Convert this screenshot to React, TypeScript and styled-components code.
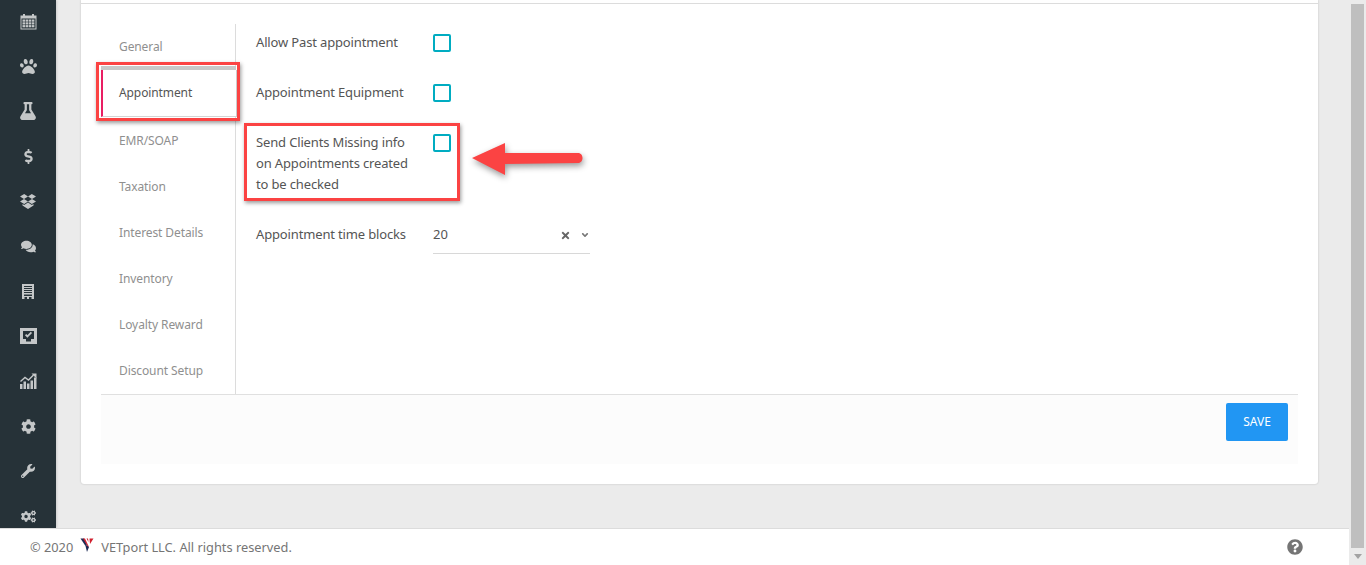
import React from "react"
import styled, { createGlobalStyle } from "styled-components"
import {
  FaPaw,
  FaFlask,
  FaDollarSign,
  FaComments,
  FaCog,
  FaWrench,
  FaCogs,
  FaQuestionCircle,
  FaTimes,
  FaAngleDown,
} from "react-icons/fa"

const GlobalStyle = createGlobalStyle`
  html, body {
    margin: 0;
    padding: 0;
    height: 565px;
    overflow: hidden;
    background: #ebebeb;
    font-family: "Noto Sans", "Liberation Sans", sans-serif;
  }
  * { box-sizing: border-box; }
`

const Page = styled.div`
  display: flex;
  width: 1366px;
  height: 565px;
`

const Viewport = styled.div`
  flex: 1;
  display: flex;
  flex-direction: column;
  min-width: 0;
`

const Body = styled.div`
  flex: 1;
  display: flex;
  min-height: 0;
`

const Sidebar = styled.nav`
  width: 56px;
  background: #263238;
  display: flex;
  flex-direction: column;
  align-items: center;
  gap: 25px;
  padding-top: 11px;
  overflow: hidden;
  box-shadow: 1px 0 2px rgba(0, 0, 0, 0.12);
  color: #c4c7c8;
`

const SideIcon = styled.span`
  height: 20px;
  flex: none;
  display: flex;
  align-items: center;
  justify-content: center;
`

const Main = styled.main`
  flex: 1;
  padding: 0 31px 0 25px;
  min-width: 0;
`

const Card = styled.section`
  position: relative;
  height: 484px;
  background: #fff;
  border-radius: 0 0 3px 3px;
  box-shadow: 0 0 2px rgba(0, 0, 0, 0.22);
  padding: 0 20px;
`

const CardHeader = styled.div`
  height: 4px;
  margin: 0 -20px 20px;
  border-bottom: 1px solid #dcdcdc;
`

const Settings = styled.div`
  display: flex;
  height: 370px;
`

const Tabs = styled.ul`
  width: 135px;
  margin: 0;
  padding: 0;
  list-style: none;
  border-right: 1px solid #dcdcdc;
`

const Tab = styled.li<{ $active?: boolean }>`
  height: 46px;
  padding-left: 18px;
  display: flex;
  align-items: center;
  font-size: 12px;
  letter-spacing: -0.1px;
  color: ${(p) => (p.$active ? "#555" : "#8f8f8f")};
  &:first-child {
    padding-bottom: 2px;
  }
  ${(p) =>
    p.$active &&
    `
    height: 47px;
    padding: 0 0 1px 16px;
    border-left: 2px solid #e91e63;
    border-bottom: 1px solid #d4d4d4;
    box-shadow: 0 -4px 0 #c8c8c8, 1px 0 0 #ccc;
    background: #fff;
    margin-right: -1px;
    position: relative;
  `}
`

const Form = styled.div`
  flex: 1;
  padding: 8px 0 0 20px;
`

const Row = styled.div<{ $height: number }>`
  display: grid;
  grid-template-columns: 177px 157px;
  align-items: start;
  height: ${(p) => p.$height}px;
`

const Label = styled.label`
  font-size: 13px;
  line-height: 21px;
  letter-spacing: -0.15px;
  color: #555;
  width: 156px;
`

const Checkbox = styled.span`
  display: block;
  width: 18px;
  height: 18px;
  margin-top: 2px;
  border: 2px solid #00acc1;
  border-radius: 2px;
`

const Select = styled.div`
  height: 30px;
  display: flex;
  align-items: flex-start;
  gap: 9px;
  line-height: 21px;
  border-bottom: 1px solid #d8d8d8;
  font-size: 13px;
  color: #555;
`

const SelectValue = styled.span`
  flex: 1;
`

const ClearIcon = styled(FaTimes)`
  font-size: 11px;
  margin-top: 6px;
  color: #666;
`

const CaretIcon = styled(FaAngleDown)`
  font-size: 10px;
  margin-top: 6px;
  color: #777;
`

const ActionBar = styled.div`
  height: 70px;
  background: #fcfcfc;
  border-top: 1px solid #e0e0e0;
  display: flex;
  justify-content: flex-end;
  padding: 8px 10px 0 0;
`

const SaveButton = styled.button`
  width: 62px;
  height: 38px;
  border: 0;
  border-radius: 2px;
  padding: 0 0 2px;
  background: #2196f3;
  color: #fff;
  font: 12px "Noto Sans", "Liberation Sans", sans-serif;
`

const Footer = styled.footer`
  height: 37px;
  flex: none;
  background: #fff;
  border-top: 1px solid #dcdcdc;
  display: flex;
  align-items: center;
  padding: 0 46px 0 30px;
  font-size: 12.8px;
  color: #757575;
`

const Copyright = styled.span`
  flex: 1;
  display: flex;
  align-items: center;
  gap: 6px;
`

const LogoMark = styled.svg`
  margin: -4px 1px 0 1px;
`

const HelpIcon = styled(FaQuestionCircle)`
  font-size: 16px;
  color: #757575;
`

const Scrollbar = styled.div`
  width: 17px;
  flex: none;
  background: #ebebeb;
  display: flex;
  flex-direction: column;
  align-items: center;
  padding-top: 4px;
`

const ScrollThumb = styled.div`
  width: 13px;
  height: 544px;
  background: #bfbfbf;
`

const ScrollArrow = styled.div`
  margin-top: 6px;
  border-left: 4px solid transparent;
  border-right: 4px solid transparent;
  border-top: 5px solid #a3a3a3;
`

const Callout = styled.div<{ $x: number; $y: number; $w: number; $h: number }>`
  position: absolute;
  left: ${(p) => p.$x}px;
  top: ${(p) => p.$y}px;
  width: ${(p) => p.$w}px;
  height: ${(p) => p.$h}px;
  border: 3px solid #fb4343;
  box-shadow: 1px 2px 4px rgba(0, 0, 0, 0.4);
  pointer-events: none;
`

const ArrowMark = styled.svg`
  position: absolute;
  left: 391px;
  top: 140px;
  overflow: visible;
  filter: drop-shadow(1px 3px 3px rgba(0, 0, 0, 0.4));
`

const CalendarIcon = () => (
  <svg width="17" height="17" viewBox="0 0 17 17" fill="currentColor">
    <path
      fillRule="evenodd"
      d="M0.5 2.5 H3 V1 H5 V2.5 H12 V1 H14 V2.5 H16.5 V16.5 H0.5 Z M1.5 5.5 V15.5 H15.5 V5.5 Z"
    />
    {[6.5, 9.3, 12.1].map((y) =>
      [2.5, 5.6, 8.7, 11.8].map((x) => <rect key={`${x}-${y}`} x={x} y={y} width="2.6" height="2.2" />)
    )}
  </svg>
)

const DropboxIcon = () => (
  <svg width="16" height="15" viewBox="0 0 16 15" fill="currentColor">
    <path d="M4.2 0 L8 2.5 L4 5 L0 2.5 Z M11.8 0 L16 2.5 L12 5 L8 2.5 Z M4 5 L8 7.5 L4.2 10 L0 7.5 Z M12 5 L16 7.5 L11.8 10 L8 7.5 Z M8 8.5 L11.8 11 L13.5 10 V11.5 L8 15 L2.5 11.5 V10 L4.2 11 Z" />
  </svg>
)

const BillIcon = () => (
  <svg width="12" height="15" viewBox="0 0 12 15" fill="currentColor">
    <path
      fillRule="evenodd"
      d="M0 0 H12 V15 H0 Z M2 2 V3 H10 V2 Z M2 4 V5 H10 V4 Z M2 6 V7 H10 V6 Z M2 8 V9 H10 V8 Z M2 10.5 V12 H10 V10.5 Z M2.5 13 V15 H5 V13 Z M7 13 V15 H9.5 V13 Z"
    />
  </svg>
)

const CheckBoxIcon = () => (
  <svg width="17" height="16" viewBox="0 0 17 16" fill="currentColor">
    <path
      fillRule="evenodd"
      d="M0 0 H17 V16 H0 Z M3 3 V11 H6 V13.5 H11 V11 H14 V3 Z"
    />
    <path d="M5.6 6.6 L7.4 8.4 L11.4 4.4" fill="none" stroke="currentColor" strokeWidth="1.8" />
  </svg>
)

const ChartIcon = () => (
  <svg width="17" height="16" viewBox="0 0 17 16" fill="currentColor">
    <path d="M0 11 H2.5 V16 H0 Z M3.5 8.5 H6 V16 H3.5 Z M7 10.5 H9.5 V16 H7 Z M10.5 7.5 H13 V16 H10.5 Z M14 4.5 H16.5 V16 H14 Z" />
    <path d="M0.5 8.5 L5 4.5 L8.5 7 L13.5 2" fill="none" stroke="currentColor" strokeWidth="1.4" />
    <path d="M11.5 0.5 H16.5 V5.5 Z" />
  </svg>
)

const sideIcons = [
  <CalendarIcon />,
  <FaPaw size={17} />,
  <FaFlask size={18} />,
  <FaDollarSign size={15} />,
  <DropboxIcon />,
  <FaComments size={15} />,
  <BillIcon />,
  <CheckBoxIcon />,
  <ChartIcon />,
  <FaCog size={15} />,
  <FaWrench size={14} />,
  <FaCogs size={15} />,
]

const tabs = ["General", "Appointment", "EMR/SOAP", "Taxation", "Interest Details", "Inventory", "Loyalty Reward", "Discount Setup"]

const Logo = () => (
  <LogoMark width="14" height="14" viewBox="0 0 14 14">
    <path d="M0.5 0.5 L4 0.5 L7 7 L5.5 8 Z" fill="#1c2a55" />
    <path d="M5.5 8 L7 7 L9 9 L7 14 Z" fill="#1c2a55" />
    <path d="M3 0.5 L5 0.5 L9 9 L7.5 8 Z" fill="#d0202f" />
    <path d="M6.5 0.5 L8 0.5 L8.5 4 Z M9.5 0.5 L13.5 0.5 L10 6 Z" fill="#d0202f" />
  </LogoMark>
)

export default function App() {
  return (
    <Page>
      <GlobalStyle />
      <Viewport>
        <Body>
          <Sidebar>
            {sideIcons.map((icon, i) => (
              <SideIcon key={i}>{icon}</SideIcon>
            ))}
          </Sidebar>
          <Main>
            <Card>
              <CardHeader />
              <Settings>
                <Tabs>
                  {tabs.map((t) => (
                    <Tab key={t} $active={t === "Appointment"}>
                      {t}
                    </Tab>
                  ))}
                </Tabs>
                <Form>
                  <Row $height={50}>
                    <Label>Allow Past appointment</Label>
                    <Checkbox />
                  </Row>
                  <Row $height={50}>
                    <Label>Appointment Equipment</Label>
                    <Checkbox />
                  </Row>
                  <Row $height={92}>
                    <Label>Send Clients Missing info on Appointments created to be checked</Label>
                    <Checkbox />
                  </Row>
                  <Row $height={40}>
                    <Label>Appointment time blocks</Label>
                    <Select>
                      <SelectValue>20</SelectValue>
                      <ClearIcon />
                      <CaretIcon />
                    </Select>
                  </Row>
                </Form>
              </Settings>
              <ActionBar>
                <SaveButton>SAVE</SaveButton>
              </ActionBar>
              <Callout $x={15} $y={62} $w={144} $h={59} />
              <Callout $x={163} $y={123} $w={216} $h={78} />
              <ArrowMark width="111" height="35" viewBox="0 0 111 35">
                <path
                  d="M0 18 L33 3 L33 13 L106 13 C112 13 112 23 106 23 L33 24 L33 35 Z"
                  fill="#fb4343"
                />
              </ArrowMark>
            </Card>
          </Main>
        </Body>
        <Footer>
          <Copyright>
            © 2020 <Logo /> VETport LLC. All rights reserved.
          </Copyright>
          <HelpIcon />
        </Footer>
      </Viewport>
      <Scrollbar>
        <ScrollThumb />
        <ScrollArrow />
      </Scrollbar>
    </Page>
  )
}
